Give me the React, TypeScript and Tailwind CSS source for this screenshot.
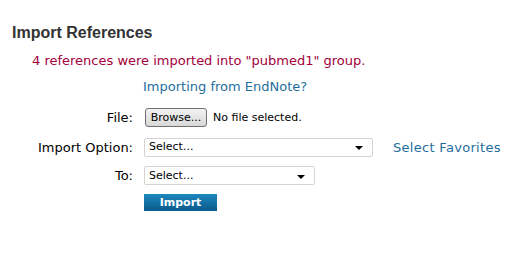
import React from 'react';

const body = "font-['DejaVu_Sans',Verdana,sans-serif]";

const FakeSelect = ({ width }: { width: string }) => (
  <div
    className={`${width} h-[19px] flex items-center justify-between rounded-[2px] border border-[#d4d4d4] bg-white pl-[4px] pr-[9px] text-[11px] text-black ${body}`}
  >
    <span>Select...</span>
    {/* little arrow */}
    <span className="w-0 h-0 border-l-[4px] border-r-[4px] border-t-[4px] border-l-transparent border-r-transparent border-t-black mt-[2px]" />
  </div>
);

const App = () => {
  return (
    <div className={`w-[519px] h-[253px] bg-white pl-[12px] pt-[24px] ${body}`}>
      <h1 className="font-['Liberation_Sans',Arial,sans-serif] font-bold text-[16px] leading-[18px] text-[#333]">
        Import References
      </h1>

      <p className="mt-[11px] pl-[20px] text-[13px] leading-[16px] text-[#a3003c]">
        4 references were imported into "pubmed1" group.
      </p>

      <div className="mt-[10px] grid grid-cols-[121px_auto] gap-x-[11px] items-center text-[13px] text-black">
        <div />
        <a className="text-[#1f6e9e] leading-[16px] -ml-[1px]">Importing from EndNote?</a>

        <div className="text-right mt-[13px]">File:</div>
        <div className="mt-[13px] flex items-center">
          <button className="ml-[1px] w-[62px] h-[19px] rounded-[3px] border border-[#707070] bg-gradient-to-b from-[#f2f2f2] to-[#d8d8d8] text-[11px] leading-none text-black">
            Browse...
          </button>
          <span className="ml-[6px] text-[11px]">No file selected.</span>
        </div>

        <div className="text-right mt-[10px]">Import Option:</div>
        <div className="mt-[10px] flex items-center">
          <FakeSelect width="w-[229px]" />
          <a className="ml-[20px] text-[#1f6e9e] tracking-[0.3px]">Select Favorites</a>
        </div>

        <div className="text-right mt-[9px]">To:</div>
        <div className="mt-[9px]">
          <FakeSelect width="w-[171px]" />
        </div>

        <div />
        <div className="mt-[6px]">
          <button className="w-[73px] h-[17px] bg-gradient-to-b from-[#1c88be] to-[#0a5a8c] text-white font-bold text-[11px] leading-none">
            Import
          </button>
        </div>
      </div>
    </div>
  );
};

export default App;
